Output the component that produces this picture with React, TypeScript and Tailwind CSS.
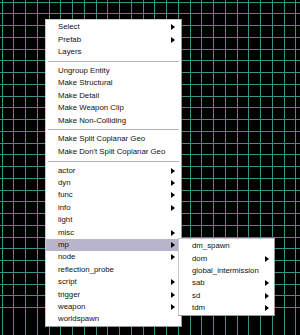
import React from "react";

type Item = { label: string; sub?: boolean; active?: boolean } | "sep";

const mainItems: Item[] = [
  { label: "Select", sub: true },
  { label: "Prefab", sub: true },
  { label: "Layers" },
  "sep",
  { label: "Ungroup Entity" },
  { label: "Make Structural" },
  { label: "Make Detail" },
  { label: "Make Weapon Clip" },
  { label: "Make Non-Colliding" },
  "sep",
  { label: "Make Split Coplanar Geo" },
  { label: "Make Don't Split Coplanar Geo" },
  "sep",
  { label: "actor", sub: true },
  { label: "dyn", sub: true },
  { label: "func", sub: true },
  { label: "info", sub: true },
  { label: "light" },
  { label: "misc", sub: true },
  { label: "mp", sub: true, active: true },
  { label: "node", sub: true },
  { label: "reflection_probe" },
  { label: "script", sub: true },
  { label: "trigger", sub: true },
  { label: "weapon", sub: true },
  { label: "worldspawn" },
];

const mpItems: Item[] = [
  { label: "dm_spawn" },
  { label: "dom", sub: true },
  { label: "global_intermission" },
  { label: "sab", sub: true },
  { label: "sd", sub: true },
  { label: "tdm", sub: true },
];

function Grid() {
  const lines = Array.from({ length: 27 }, (_, k) => Math.round(1.5 + 11.75 * k));
  return (
    <svg width="300" height="335" className="block">
      <rect width="300" height="335" fill="#000" />
      {lines.map((p) => (
        <g key={p} stroke="#379283" strokeWidth="1">
          <line x1={p + 0.5} y1="0" x2={p + 0.5} y2="335" />
          <line x1="0" y1={p + 0.5} x2="300" y2={p + 0.5} />
        </g>
      ))}
    </svg>
  );
}

function Arrow() {
  return (
    <svg width="4" height="6" viewBox="0 0 4 6" className="shrink-0">
      <path d="M0 0 L4 3 L0 6 Z" fill="#000" />
    </svg>
  );
}

function Menu({ items, className, pad }: { items: Item[]; className: string; pad: string }) {
  return (
    <div className={`absolute bg-white border border-[#c8c8c8] border-r-[#9a9a9a] border-b-[#9a9a9a] py-[1px] ${className}`}>
      {items.map((it, i) =>
        it === "sep" ? (
          <div key={i} className="h-[6.5px] flex flex-col justify-center px-[2px]">
            <div className="h-[1px] bg-[#b4b4b4]" />
          </div>
        ) : (
          <div
            key={i}
            className={`h-[12.4px] flex items-center justify-between pl-[12px] ${pad} ${it.active ? "bg-[#b8b5cb]" : ""}`}
          >
            <span className="whitespace-nowrap">{it.label}</span>
            {it.sub && <Arrow />}
          </div>
        )
      )}
    </div>
  );
}

export default function App() {
  return (
    <div
      className="relative w-[300px] h-[335px] overflow-hidden text-[7.8px] leading-none text-[#111]"
      style={{ fontFamily: '"Liberation Sans", Arial, sans-serif' }}
    >
      <Grid />
      <Menu items={mainItems} className="left-[45px] top-[19px] w-[137px]" pad="pr-[6px]" />
      <Menu items={mpItems} className="left-[178px] top-[238px] w-[97px]" pad="pr-[5px] pl-[13px]" />
    </div>
  );
}
